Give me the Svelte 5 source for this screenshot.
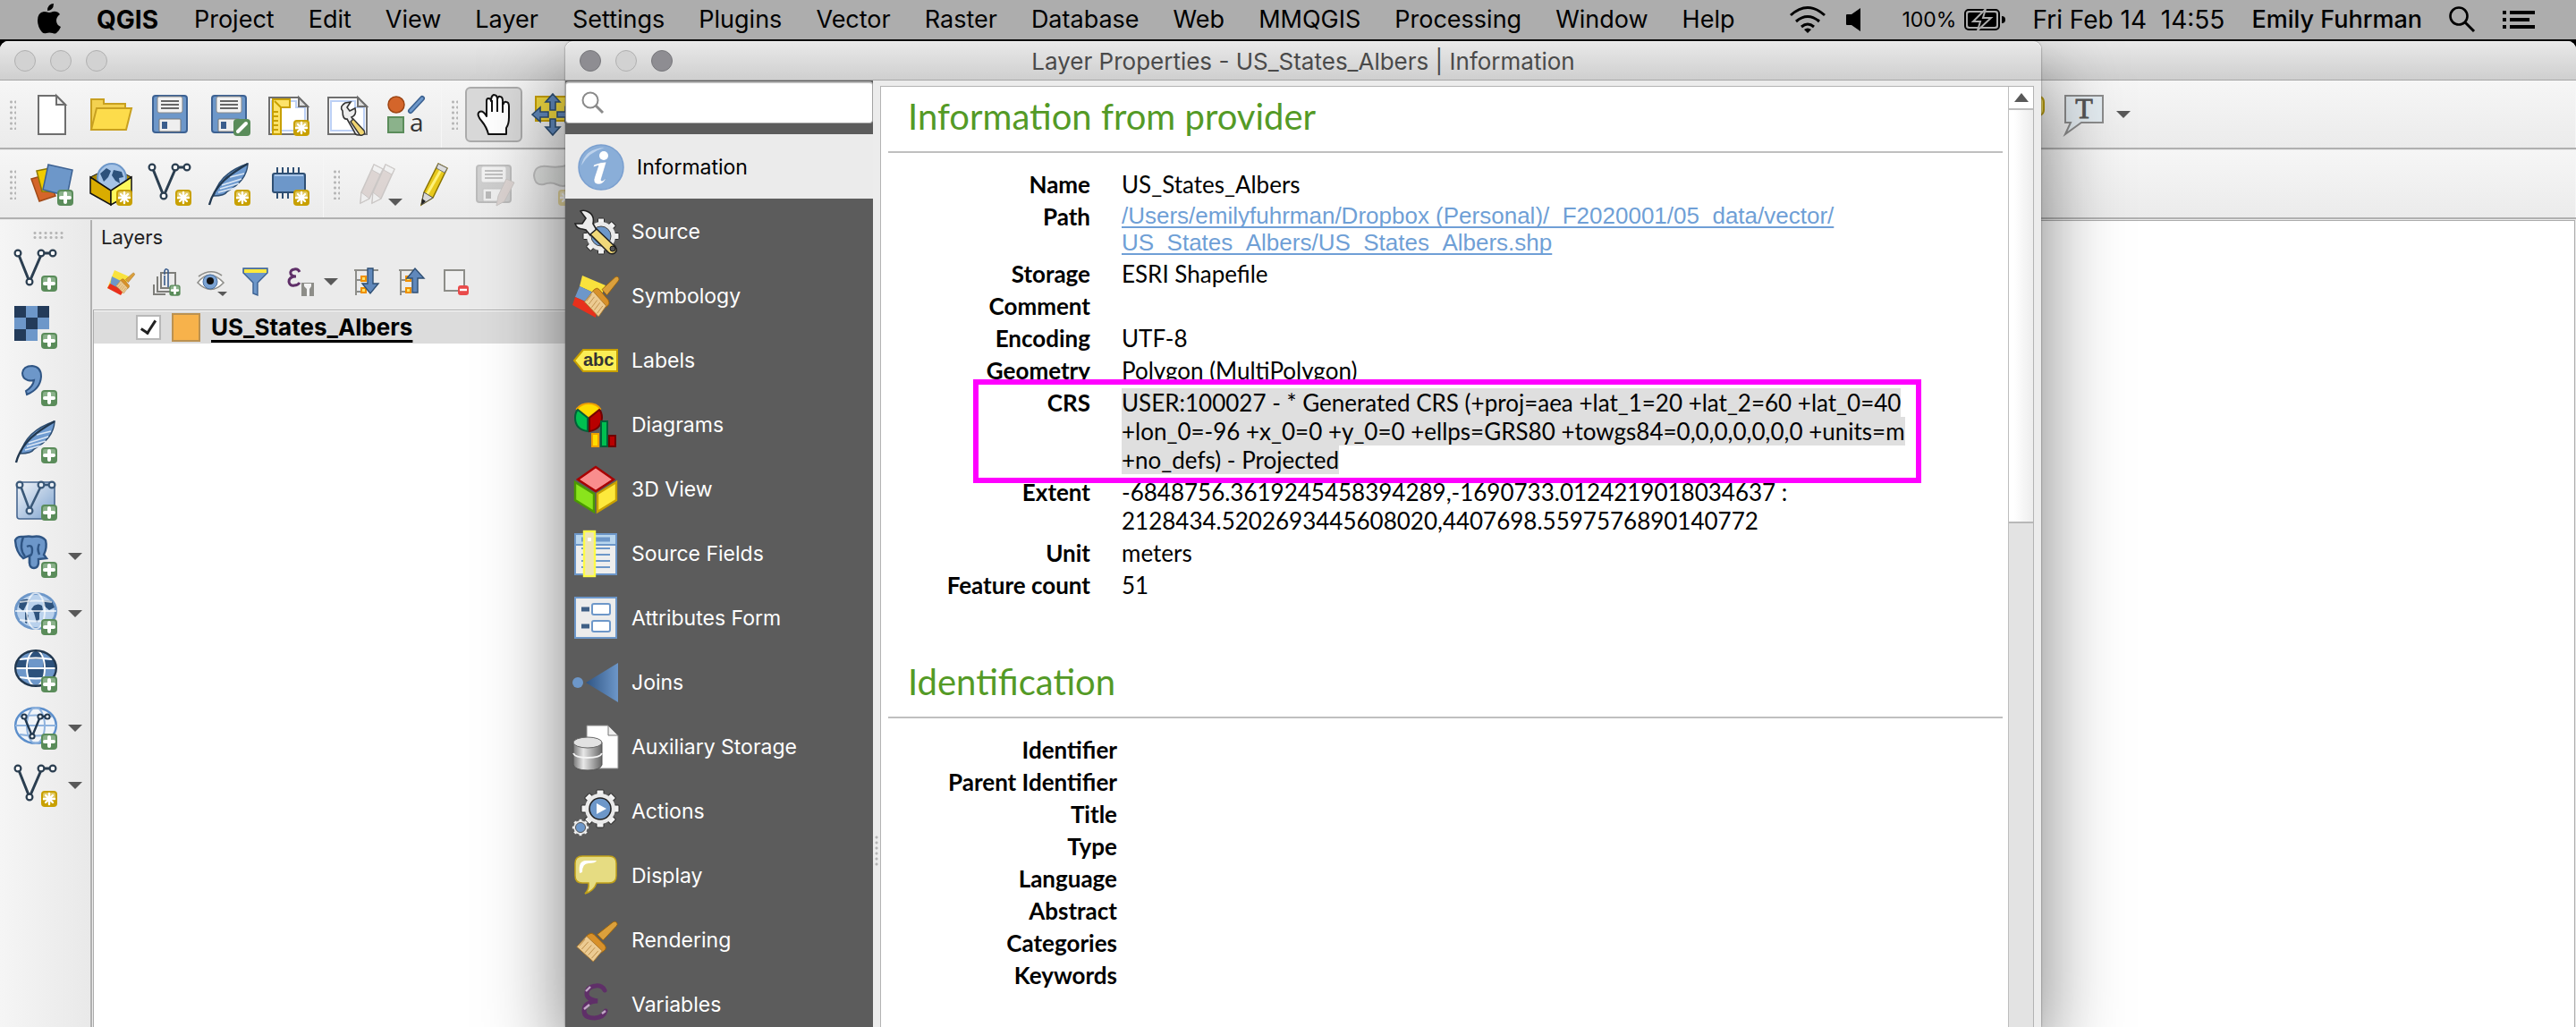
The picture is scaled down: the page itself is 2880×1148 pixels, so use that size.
<script>
  const menus = ['Project', 'Edit', 'View', 'Layer', 'Settings', 'Plugins', 'Vector', 'Raster', 'Database', 'Web', 'MMQGIS', 'Processing', 'Window', 'Help'];

  const fileTools = [
    ['page', 'New project'], ['folder', 'Open project'], ['save', 'Save project'], ['saveas', 'Save project as'],
    ['layout', 'New print layout'], ['layouts', 'Layout manager'], ['styles', 'Style manager'],
  ];
  const sourceTools = [
    ['datasource', 'Data source manager'], ['geopackage', 'New GeoPackage layer'], ['vnew', 'New shapefile layer'],
    ['feathernew', 'New SpatiaLite layer'], ['chip', 'New temporary scratch layer'],
  ];
  const dock = [
    ['vadd', 'Add vector layer', false], ['raster', 'Add raster layer', false], ['comma', 'Add delimited text layer', false],
    ['featheradd', 'Add SpatiaLite layer', false], ['virtual', 'Add virtual layer', false], ['elephant', 'Add PostGIS layer', true],
    ['wms', 'Add WMS layer', true], ['wcs', 'Add WCS layer', false], ['wfs', 'Add WFS layer', true], ['vnew', 'New vector layer', true],
  ];
  const pages = [
    ['source', 'Source'], ['symbology', 'Symbology'], ['labels', 'Labels'], ['diagrams', 'Diagrams'], ['cube', '3D View'],
    ['fields', 'Source Fields'], ['form', 'Attributes Form'], ['joins', 'Joins'], ['storage', 'Auxiliary Storage'],
    ['actions', 'Actions'], ['display', 'Display'], ['rendering', 'Rendering'], ['variables', 'Variables'],
  ];
  const identification = ['Identifier', 'Parent Identifier', 'Title', 'Type', 'Language', 'Abstract', 'Categories', 'Keywords'];
  const teeth = [0, 45, 90, 135, 180, 225, 270, 315];
  let visible = $state(true);
  let query = $state('');
</script>

{#snippet plus()}
  <rect x="30" y="30" width="18" height="18" rx="4" fill="#5a8c5a" />
  <path d="M32 34q0-2 2-2h10q2 0 2 2v4q-7 0-14 3z" fill="#8bb28b" />
  <path d="M39 34v10M34 39h10" stroke="#fff" stroke-width="4" stroke-linecap="round" />
{/snippet}

{#snippet star()}
  <rect x="30" y="30" width="18" height="18" rx="4" fill="#c8a000" />
  <path d="M32 34q0-2 2-2h10q2 0 2 2v4q-7 0-14 3z" fill="#e0c860" />
  <path d="M39 33v12M33 39h12M35 35l8 8M43 35l-8 8" stroke="#fff" stroke-width="2.4" stroke-linecap="round" />
{/snippet}

{#snippet floppy()}
  <rect x="5" y="3" width="38" height="41" rx="3" fill="#6d97c9" stroke="#3c6192" stroke-width="2" />
  <rect x="10" y="4" width="28" height="18" rx="2" fill="#f2f2f2" stroke="#8a8a8a" />
  <path d="M14 9h20M14 13h20M14 17h20" stroke="#666" stroke-width="2" />
  <rect x="12" y="29" width="24" height="14" rx="1" fill="#efefef" stroke="#777" />
  <rect x="15" y="32" width="6" height="8" fill="#3a5d8c" />
{/snippet}

{#snippet vline()}
  <path d="M5 7L17 37L30 7M33 5h9" fill="none" stroke="#2b3e50" stroke-width="3" />
  {#each [[4, 5], [17, 37], [30, 5], [43, 5]] as [x, y]}
    <circle cx={x} cy={y} r="3.4" fill="#fff" stroke="#2b3e50" stroke-width="2.2" />
  {/each}
{/snippet}

{#snippet feather()}
  <path d="M45 1C24 8 11 20 7 37q12 0 15-5 22-12 23-31z" fill="#6f9bd0" stroke="#2f4f73" stroke-width="1.5" />
  <path d="M16 25l22-7M14 29l21-6M12 33l19-5M25 16l16-4" stroke="#dbe7f5" stroke-width="1.6" />
  <path d="M45 1C26 12 8 24 2 47" fill="none" stroke="#22384f" stroke-width="2.4" />
{/snippet}

{#snippet sheet()}
  <path d="M3 5h33l10 10v31H3z" fill="#fff" stroke="#6e6e6e" stroke-width="2" />
  <path d="M6 9h27v7h10v26H6z" fill="none" stroke="#bcd0f5" stroke-width="2" />
  <path d="M36 5v10h10z" fill="#ddd" stroke="#6e6e6e" stroke-width="2" />
{/snippet}

{#snippet brush()}
  <path d="M46 3q3-2 5 1 1 2-1 4L34 25l-7-7z" fill="#dba03c" stroke="#9a6208" />
  <path d="M16 18q4-3 7 0l13 13q3 4-1 7l-3 2-19-19z" fill="#d8912a" stroke="#9a6208" />
  <path d="M14 20l19 18-11 13L2 33z" fill="#eccb92" stroke="#a8762a" />
  <path d="M12 24L5 32M16 27l-8 9M20 31l-8 9M24 34l-8 9M28 38l-8 9" stroke="#b98a45" />
{/snippet}

{#snippet grid(line)}
  <ellipse cx="24" cy="21" rx="10" ry="20" fill="none" stroke={line} stroke-width="2" />
  <path d="M1 21h46M6 11q18 -3 36 0M6 31q18 3 36 0" fill="none" stroke={line} stroke-width="2" />
{/snippet}

{#snippet land()}
  <path d="M6 10q7-4 12-1l-5 6-3 6-5-4zM22 15q5-3 9 0l1 5-4 3v7l-3 4-3-11-3-4zM32 9l10 1 3 7-6 3-6-5zM12 22l4 4-2 9-2-1z" fill="#2d527c" />
{/snippet}

{#snippet gear(cx, cy, r, tooth)}
  <g transform="translate({cx} {cy})">
    {#each teeth as a}
      <rect x={-tooth / 2} y={-r - 4} width={tooth} height="8" rx="1" transform="rotate({a})" fill="#f2f2f2" stroke="#2c2c2c" />
    {/each}
    <circle {r} fill="#eaeaea" />
  </g>
{/snippet}

{#snippet art(name)}
  {#if name === 'page'}
    <path d="M9 3h20l10 10v33H9z" fill="#fff" stroke="#6e6e6e" stroke-width="2" />
    <path d="M29 3v10h10z" fill="#eee" stroke="#6e6e6e" stroke-width="2" />
  {:else if name === 'folder'}
    <path d="M2 41V7h14v5h24v6" fill="#f3d150" stroke="#c8a020" stroke-width="2" />
    <path d="M8 17h39l-6 24H2z" fill="#fddc4b" stroke="#c8a020" stroke-width="2" />
  {:else if name === 'save'}
    {@render floppy()}
  {:else if name === 'saveas'}
    {@render floppy()}
    <rect x="29" y="29" width="19" height="19" rx="4" fill="#5a8c5a" />
    <path d="M34 43l9-9" stroke="#fff" stroke-width="4" stroke-linecap="round" />
  {:else if name === 'layout'}
    {@render sheet()}
    <path d="M7 7h19v9h-10v30H7z" fill="#fde36a" stroke="#c8a000" stroke-width="2" />
    <path d="M9 9l7 7M8 21h5M8 26h5M8 31h5M8 36h5M8 41h5" stroke="#c8a000" stroke-width="2" />
    {@render star()}
  {:else if name === 'layouts'}
    {@render sheet()}
    <path d="M19 20q-4-5 3-9l6-1-4 6 3 4 6-3q2 8-4 10l10 15q2 4-2 5-4 0-5-4l-8-14q-5 1-5-9z" fill="#ededed" stroke="#333" stroke-width="1.6" />
    <path d="M31 29l12 13q2 4-2 5-3 1-4-2l-9-13z" fill="#f0d470" stroke="#333" stroke-width="1.4" />
  {:else if name === 'styles'}
    <circle cx="13" cy="13" r="9" fill="#d4652a" stroke="#9c4413" stroke-width="1.5" />
    <path d="M29 20L42 6" stroke="#3a6090" stroke-width="6" stroke-linecap="round" />
    <path d="M29 20L42 6" stroke="#6d97c9" stroke-width="3" stroke-linecap="round" />
    <rect x="4" y="27" width="17" height="17" fill="#8bb28b" stroke="#5a8c5a" stroke-width="2" />
    <text x="28" y="43" class="t-a">a</text>
  {:else if name === 'hand'}
    <path d="M18 46q-2-8-7-14-7-8-3-11 4-2 8 5V9q0-3 2-3 3 0 3 3 0-6 3-7 4 0 4 5 1-4 3-3 3 0 3 5l1 3q1-3 3-2 3 0 3 5v12q0 8-3 12v7z" fill="#fff" stroke="#111" stroke-width="2" stroke-linejoin="round" />
    <path d="M22 8v13M28 7v14M34 10v12" stroke="#111" stroke-width="2" />
  {:else if name === 'move'}
    <rect x="5" y="4" width="38" height="27" fill="#f0d840" stroke="#c8a000" stroke-width="2" />
    <path d="M24 1l8 9h-5v9h-6v-9h-5zM24 47l8-9h-5v-9h-6v9h-5zM1 24l9-8v5h9v6h-9v5zM47 24l-9-8v5h-9v6h9v5z" fill="#6088bb" stroke="#2f4f73" stroke-width="1.6" />
  {:else if name === 'tip'}
    <path d="M4 4h37q4 2 4 6v9q0 4-4 6H4z" fill="#f0dc5a" stroke="#b89b10" stroke-width="2" />
  {:else if name === 'annotation'}
    <path d="M3 3h42v30H21L3 46l6-13H3z" fill="#e4ecf1" stroke="#8c8c8c" stroke-width="2" />
    <text x="24" y="28" class="t-t">T</text>
  {:else if name === 'datasource'}
    <path d="M1 18l18-5 9 24-18 6z" fill="#d4652a" stroke="#a04a18" stroke-width="1.5" />
    <path d="M7 9l20-4 4 28-18-1z" fill="#f0cc00" stroke="#8d7800" stroke-width="1.5" />
    <path d="M20 2l27 6-6 29-27-7z" fill="#6d97c9" stroke="#3c6192" stroke-width="1.5" />
    {@render plus()}
  {:else if name === 'geopackage'}
    <path d="M1 16l10-5 13 8 13-8 10 5-23 14z" fill="#a88600" stroke="#111" />
    <circle cx="25" cy="17" r="16" fill="#a5c3e6" stroke="#6d97c9" stroke-width="2" />
    <path d="M12 12l7-6 5 3-3 7-5 5zM27 8l9 2 2 6-5 1 1 6-5-3-4-6z" fill="#2d527c" />
    <path d="M1 16l23 15v16L1 34z" fill="#d9ac00" stroke="#111" stroke-width="1.5" />
    <path d="M47 16L24 31v16l23-13z" fill="#fff95c" stroke="#111" stroke-width="1.5" />
    {@render star()}
  {:else if name === 'vnew'}
    {@render vline()}{@render star()}
  {:else if name === 'vadd'}
    {@render vline()}{@render plus()}
  {:else if name === 'feathernew'}
    {@render feather()}{@render star()}
  {:else if name === 'featheradd'}
    {@render feather()}{@render plus()}
  {:else if name === 'chip'}
    <path d="M12 5v8M18 5v8M24 5v8M30 5v8M36 5v8M12 33v7M18 33v7M24 33v7" stroke="#2f4f73" stroke-width="2" />
    <rect x="7" y="12" width="36" height="21" rx="2" fill="#6d97c9" stroke="#2f4f73" stroke-width="2" />
    <path d="M9 14h32" stroke="#a8c6ea" stroke-width="2" />
    {@render star()}
  {:else if name === 'pencils'}
    <g class="faded">
      <path d="M22 2l10 5-15 33-10 5 1-12zM35 2l10 5-15 33-10 5 1-12z" fill="#b9a29c" stroke="#857a76" stroke-width="1.5" />
      <path d="M22 2l10 5-3 6-9-5zM35 2l10 5-3 6-9-5zM8 33l9 7-10 5zM21 33l9 7-10 5z" fill="#eee" stroke="#857a76" />
    </g>
  {:else if name === 'pencil'}
    <path d="M28 1l10 5-16 33L9 47l3-14z" fill="#e8c91c" stroke="#8a7400" stroke-width="1.5" />
    <path d="M31 8L15 36" stroke="#fff27a" stroke-width="3" />
    <path d="M28 1l10 5-3 5-9-5z" fill="#ddd" stroke="#777" />
    <path d="M12 33l10 6L9 47z" fill="#d9d9d9" stroke="#555" />
    <path d="M10 40l4 3-5 4z" fill="#222" />
  {:else if name === 'saveedits'}
    <g class="faded"><g class="grey">{@render floppy()}</g>
      <path d="M38 18l9 4-11 21-9 5 2-11z" fill="#b9a29c" stroke="#857a76" /></g>
  {:else if name === 'blob'}
    <g class="faded"><path d="M3 14Q4 2 18 4t24-2q8 12 0 22-6 4-14 0-6-3-14 0Q4 26 3 14z" fill="#bdc2bd" stroke="#666" stroke-width="2" />{@render star()}</g>
  {:else if name === 'raster'}
    <rect width="39" height="39" fill="#6d97c9" />
    <path d="M0 0h13v13H0zM26 0h13v13H26zM13 13h13v13H13zM0 26h13v13H0z" fill="#233b5a" />
    <path d="M26 26h13v13H26z" fill="#ededed" />
    {@render plus()}
  {:else if name === 'comma'}
    <path d="M20 3q10 1 10 12-1 14-16 20l-1-4q8-5 9-12-3 1-7 0-6-2-6-8 1-8 11-8z" fill="#6d97c9" stroke="#2f5584" stroke-width="2" />
    {@render plus()}
  {:else if name === 'virtual'}
    <rect x="3" y="5" width="42" height="41" rx="3" fill="url(#skyfade)" stroke="#46668f" stroke-width="1.6" />
    <path d="M7 9l10 27L30 9M33 8h8" fill="none" stroke="#3a5878" stroke-width="2.6" />
    {#each [[6, 8], [17, 37], [30, 8], [42, 8]] as [x, y]}
      <circle cx={x} cy={y} r="3.4" fill="#e8eef5" stroke="#3a5878" stroke-width="2.2" />
    {/each}
    {@render plus()}
  {:else if name === 'elephant'}
    <path d="M1 6Q3 1 10 2q7-1 10 0 10-2 15 4 2 8-2 16l3 4-9 1v5q-1 5-5 5-5 0-5-6v-8l-7 3Q2 20 1 6z" fill="#6d97c9" stroke="#2f5584" stroke-width="2.4" />
    <path d="M10 2q-5 14 2 22M14 13q6-3 6 4t-4 6M28 22q-3-7 0-12M17 24v8" fill="none" stroke="#2f5584" stroke-width="2.4" />
    {@render plus()}
  {:else if name === 'wms'}
    <ellipse cx="24" cy="21" rx="22.5" ry="19.5" fill="#b9d1ec" stroke="#6d97c9" stroke-width="3" />
    {@render land()}{@render grid('#ffffffb0')}{@render plus()}
  {:else if name === 'wcs'}
    <ellipse cx="24" cy="21" rx="22.5" ry="19.5" fill="#6d97c9" />
    <path d="M3 12h13v9H2zM32 12h13l2 9H32zM17 3q7-3 14 0l2 8H15zM14 22h20l-1 9H15z" fill="#2d527c" />
    {@render grid('#fff')}
    <ellipse cx="24" cy="21" rx="22.8" ry="19.8" fill="none" stroke="#22384f" stroke-width="2.4" />
    {@render plus()}
  {:else if name === 'wfs'}
    <ellipse cx="24" cy="21" rx="22.8" ry="19.8" fill="#f0f4f9" stroke="#5b8ecb" stroke-width="2.4" />
    {@render grid('#8fb3de')}
    <path d="M11 11l9 22 9-22h8" fill="none" stroke="#22384f" stroke-width="2.4" />
    {#each [[11, 11], [20, 33], [29, 11], [37, 11]] as [x, y]}
      <circle cx={x} cy={y} r="2.6" fill="#fff" stroke="#22384f" stroke-width="2" />
    {/each}
    {@render plus()}
  {/if}
{/snippet}

{#snippet tool(name, label)}
  <button class="tool" aria-label={label}><svg viewBox="0 0 48 48">{@render art(name)}</svg></button>
{/snippet}

{#snippet pageArt(name)}
  {#if name === 'source'}
    {@render gear(32, 31, 16, 7)}
    <circle cx="32" cy="31" r="11" fill="#6d97c9" stroke="#444" />
    <path d="M3 17q2 6 8 6l4 1 5 6 7-6-4-7q2-9-5-13-5-3-9-1l6 8-4 6z" fill="#ececec" stroke="#222" stroke-width="1.6" />
    <path d="M20 29l7-6 21 20q3 4-1 7-4 2-7-1z" fill="#f0d879" stroke="#222" stroke-width="1.6" />
    <circle cx="45" cy="45" r="3" fill="#555" stroke="#111" />
  {:else if name === 'symbology'}
    <path d="M11 3l26 11-5 12L8 15z" fill="#f9e23c" />
    <path d="M8 15l24 11-4 12L3 27z" fill="#6d97c9" />
    <path d="M3 27l25 11-2 12L0 36z" fill="#e8301c" />
    <g transform="translate(12 2) scale(.78 .92)">{@render brush()}</g>
  {:else if name === 'labels'}
    <path d="M2 26L12 14h38v24H12z" fill="#fbee56" stroke="#c8a000" stroke-width="2" />
    <text x="12" y="32" class="t-abc">abc</text>
  {:else if name === 'diagrams'}
    <path d="M18 18L5 8q5-6 13-6 9 0 13 6z" fill="#ffdc00" stroke="#f0a000" stroke-width="2" />
    <path d="M17 18v15Q3 31 3 18q0-6 3-9z" fill="#00c050" stroke="#006038" stroke-width="2" />
    <path d="M19 18v15q13-2 14-15 0-6-3-9z" fill="#b80000" stroke="#700000" stroke-width="2" />
    <rect x="22" y="36" width="7" height="14" fill="#ffdc00" stroke="#f0a000" stroke-width="2" />
    <rect x="41" y="38" width="7" height="12" fill="#b80000" stroke="#700000" stroke-width="2" />
    <rect x="32" y="22" width="7" height="28" fill="#00c050" stroke="#006038" stroke-width="2" />
  {:else if name === 'cube'}
    <path d="M26 1l20 14-20 13L6 15z" fill="#f98d8d" stroke="#a80000" stroke-width="2.4" />
    <path d="M3 18l21 13v20L3 38z" fill="#8ae41c" stroke="#4a9a00" stroke-width="2.4" />
    <path d="M49 18L28 31v20l21-13z" fill="#fde93c" stroke="#c8a000" stroke-width="2.4" />
  {:else if name === 'fields'}
    <rect x="3" y="4" width="46" height="45" fill="#eee" stroke="#6d97c9" stroke-width="2" />
    <rect x="4" y="5" width="44" height="11" fill="#b9d6ee" />
    <path d="M3 16h46M10 20h32M10 27h32M10 34h32M10 41h32" stroke="#6d97c9" stroke-width="2" />
    <path d="M10 10h32" stroke="#6d97c9" stroke-width="5" />
    <rect x="13" y="1" width="12" height="50" fill="#eee5b8" stroke="#fdfb46" stroke-width="2.4" />
    <rect x="17" y="8" width="4" height="4" fill="#fff" />
  {:else if name === 'form'}
    <rect x="3" y="3" width="46" height="45" fill="#ececec" stroke="#6d97c9" stroke-width="2" />
    <path d="M10 16h9M10 35h9" stroke="#3f5f85" stroke-width="5" />
    <rect x="22" y="10" width="20" height="12" rx="2" fill="#fff" stroke="#6d97c9" stroke-width="2" />
    <rect x="22" y="29" width="20" height="12" rx="2" fill="#fff" stroke="#6d97c9" stroke-width="2" />
  {:else if name === 'joins'}
    <circle cx="6" cy="26" r="6" fill="#6d97c9" />
    <path d="M15 26L51 4v44z" fill="url(#cone)" />
  {:else if name === 'storage'}
    <path d="M16 2h24l11 11v37H16z" fill="#fff" stroke="#888" />
    <path d="M40 2v11h11z" fill="#eee" stroke="#777" />
    <path d="M1 21v25q2 6 16 6t16-6V21z" fill="url(#steel)" stroke="#555" />
    <path d="M1 33q2 5 16 5t16-5" fill="none" stroke="#f5f5f5" stroke-width="2" />
    <ellipse cx="17" cy="21" rx="16" ry="6" fill="#e2e2e2" stroke="#666" />
  {:else if name === 'actions'}
    {@render gear(31, 23, 17, 8)}
    <circle cx="31" cy="23" r="12" fill="#6d97c9" stroke="#222" stroke-width="1.6" />
    <path d="M27 17v12l11-6z" fill="#fff" />
    <g transform="translate(9 44) scale(.45)">{@render gear(0, 0, 17, 8)}</g>
    <circle cx="9" cy="44" r="5.5" fill="#6d97c9" stroke="#555" />
  {:else if name === 'display'}
    <path d="M11 4h30q8 0 8 8v14q0 8-8 8H27q-3 9-13 12 5-5 4-12h-7q-8 0-8-8V12q0-8 8-8z" fill="#e6dc82" stroke="#c0a018" stroke-width="1.5" />
    <path d="M8 23q-2-14 7-14h12q-1 3-9 3-7 0-7 10z" fill="#fff" />
  {:else if name === 'rendering'}
    <g transform="translate(3 3) scale(.92)">{@render brush()}</g>
  {:else if name === 'variables'}
    <path d="M36 10Q33 4 26 5q-10 1-10 9 0 6 12 8-15 1-15 11 0 8 12 8 10-1 12-8" fill="none" stroke="#5f2f68" stroke-width="5" stroke-linecap="round" />
    <path d="M15 11l5-5M13 31l6-5M33 36l4-3" stroke="#c3a8c8" stroke-width="2.4" />
  {/if}
{/snippet}

{#snippet arrow()}
  <svg class="arrow" viewBox="0 0 16 8"><path d="M0 0h16L8 8z" fill="#595959" /></svg>
{/snippet}

<svg class="defs" aria-hidden="true">
  <defs>
    <linearGradient id="skyfade" x1="0" y1="0" x2="1" y2="1"><stop offset="0" stop-color="#f2f5f9" /><stop offset="1" stop-color="#7ea3cf" /></linearGradient>
    <linearGradient id="cone"><stop offset="0" stop-color="#2f5584" /><stop offset="1" stop-color="#6d97c9" /></linearGradient>
    <linearGradient id="steel"><stop offset="0" stop-color="#777" /><stop offset=".35" stop-color="#e8e8e8" /><stop offset="1" stop-color="#666" /></linearGradient>
  </defs>
</svg>

<div class="screen">
  <header class="menubar">
    <svg class="apple" viewBox="0 0 26 34"><path d="M18 1q0 4-2 6t-5 2q0-4 2-6t5-2zM13 11q2 0 4-1 5-1 8 3-4 3-4 7 0 5 5 7-2 5-5 7-2 1-4 0-4-1-7 0-3 1-5-1Q0 27 0 20q0-9 7-10 2 0 6 1z" /></svg>
    <b>QGIS</b>
    {#each menus as m}<span>{m}</span>{/each}
    <div class="status">
      <svg class="wifi" viewBox="0 0 42 30"><g fill="none" stroke="#000" stroke-width="3"><path d="M2 10q19-17 38 0M8 17q13-11 26 0M14 23q7-6 14 0" /></g><path d="M17 26q4-3 8 0l-4 4z" /></svg>
      <svg class="volume" viewBox="0 0 17 26"><path d="M0 8q0-1 1-1h5l10-7v26L6 19H1q-1 0-1-1z" /></svg>
      <span class="charge">100%
        <svg class="battery" viewBox="0 0 46 24"><rect x="1" y="1" width="38" height="22" rx="4" fill="none" stroke="#000" stroke-width="2" /><rect x="4" y="4" width="32" height="16" rx="2" /><path d="M42 8q4 0 4 4t-4 4z" /><path d="M24 0L10 14h8l-3 10L30 10h-9z" stroke="#adadad" stroke-width="2" /></svg>
      </span>
      <span class="clock">Fri Feb 14&nbsp; 14:55</span>
      <span class="user">Emily Fuhrman</span>
      <svg class="find" viewBox="0 0 30 30"><circle cx="11" cy="11" r="9.5" fill="none" stroke="#000" stroke-width="2.6" /><path d="M18 18l10 10" stroke="#000" stroke-width="3" /></svg>
      <svg class="list" viewBox="0 0 36 20"><path d="M0 2h4M8 2h28M0 10h4M8 10h22M0 18h4M8 18h28" stroke="#000" stroke-width="4" /></svg>
    </div>
  </header>

  <main class="window">
    <div class="titlebar"><i></i><i></i><i></i></div>

    <div class="toolbar">
      <div class="segment"><span class="grip"></span>{#each fileTools as [n, l]}{@render tool(n, l)}{/each}</div>
      <div class="segment grow">
        <span class="grip"></span>
        <button class="tool pressed" aria-label="Pan map"><svg viewBox="0 0 48 48">{@render art('hand')}</svg></button>
        {@render tool('move', 'Pan map to selection')}
        <div class="far">{@render tool('tip', 'Show map tips')}{@render tool('annotation', 'Text annotation')}{@render arrow()}</div>
      </div>
    </div>
    <div class="toolbar">
      <div class="segment"><span class="grip"></span>{#each sourceTools as [n, l]}{@render tool(n, l)}{/each}</div>
      <div class="segment grow">
        <span class="grip"></span>
        <div class="with-menu">{@render tool('pencils', 'Current edits')}{@render arrow()}</div>
        {@render tool('pencil', 'Toggle editing')}
        {@render tool('saveedits', 'Save layer edits')}
        {@render tool('blob', 'Add polygon feature')}
      </div>
    </div>

    <div class="workspace">
      <nav class="dock">
        <span class="grip wide"></span>
        {#each dock as [n, l, more]}
          <div class="dock-row">{@render tool(n, l)}{#if more}{@render arrow()}{/if}</div>
        {/each}
      </nav>

      <section class="layers">
        <h2>Layers</h2>
        <div class="layer-tools">
          <button aria-label="Open layer styling"><svg viewBox="0 0 32 32"><path d="M8 3l16 7-8 20L0 23z" fill="#f9e23c" /><path d="M5 10l16 8-4 9-14-7z" fill="#6d97c9" /><path d="M3 18l15 8-3 5-15-8z" fill="#e8301c" /><g transform="translate(9 5) scale(.42 .47)">{@render brush()}</g></svg></button>
          <button aria-label="Add group"><svg viewBox="0 0 32 32"><path d="M6 10v17h17M10 6h16v17H10zM2 19v11h13" fill="none" stroke="#7e7e7a" stroke-width="2" /><path d="M14 20V9M18 22V3q-3-3-4 1v4" fill="none" stroke="#3a5d8c" stroke-width="1.6" /><g transform="translate(-1 -1) scale(.68)">{@render plus()}</g></svg></button>
          <button aria-label="Manage map themes"><svg viewBox="0 0 32 32"><path d="M1 17Q14 0 30 17 16 32 1 17z" fill="#fff" stroke="#8e8e8a" stroke-width="1.6" /><path d="M2 10q14-10 26-1" fill="none" stroke="#8e8e8a" stroke-width="1.6" /><circle cx="15" cy="16" r="8" fill="#7ba3d3" stroke="#4a6f9f" /><circle cx="15" cy="15" r="4" fill="#111" /><path d="M23 27h11l-5 5z" fill="#595959" /></svg></button>
          <button aria-label="Filter legend"><svg viewBox="0 0 32 32"><path d="M2 1h27v5L18 17v14l-5-2V17L2 6z" fill="#6d97c9" stroke="#3c6192" stroke-width="1.4" /><path d="M3 2h25v4H3z" fill="#fde93c" /></svg></button>
          <button class="joined" aria-label="Filter by expression"><svg viewBox="0 0 32 32"><path d="M15 5q-2-4-6-3-5 1-4 5 1 3 6 3-8 0-8 6 1 5 6 4 4 0 6-3" fill="none" stroke="#5f2f68" stroke-width="3" /><path d="M17 17h14v15h-5v-8h-3v8h-6z" fill="#8d8d88" /><path d="M20 18h8v3l-2 3v7h-3v-7l-3-3z" fill="#f3f3f3" /></svg>{@render arrow()}</button>
          <button aria-label="Expand all"><svg viewBox="0 0 32 32"><path d="M2 3h27M4 3v28M4 14h6M4 27h6" stroke="#8d8d88" stroke-width="2" fill="none" /><path d="M10 10h5v5h-5zM10 23h5v5h-5z" fill="#fde36a" stroke="#f09000" stroke-width="2" /><path d="M17 1h6v17h6l-9 11-9-11h6z" fill="#6088bb" stroke="#2f4f73" stroke-width="1.4" /></svg></button>
          <button aria-label="Collapse all"><svg viewBox="0 0 32 32"><path d="M2 3h20M4 3v28M4 14h6M4 27h6" stroke="#8d8d88" stroke-width="2" fill="none" /><path d="M10 10h5v5h-5zM10 23h5v5h-5z" fill="#fde36a" stroke="#f09000" stroke-width="2" /><path d="M17 28h6V12h7L20 1l-9 11h6z" fill="#6088bb" stroke="#2f4f73" stroke-width="1.4" /></svg></button>
          <button aria-label="Remove layer"><svg viewBox="0 0 32 32"><rect x="3" y="3" width="22" height="23" fill="#f0f0f0" stroke="#8d8d88" stroke-width="2" /><rect x="18" y="20" width="12" height="11" rx="3" fill="#e94b4b" /><path d="M20 25h8" stroke="#fff" stroke-width="2.4" /></svg></button>
        </div>
        <div class="tree">
          <div class="layer">
            <label><input type="checkbox" bind:checked={visible} /><span class="swatch"></span><span class="layer-name">US_States_Albers</span></label>
          </div>
        </div>
      </section>
      <div class="canvas"></div>
    </div>
  </main>

  <div class="dialog" role="dialog" aria-label="Layer Properties">
    <div class="titlebar"><i class="on"></i><i></i><i class="on"></i><h1>Layer Properties - US_States_Albers | Information</h1></div>
    <div class="dialog-body">
      <aside>
        <label class="search">
          <svg viewBox="0 0 26 26"><circle cx="10" cy="10" r="8.5" fill="none" stroke="#8a8a8a" stroke-width="2" /><path d="M16 16l8 8" stroke="#8a8a8a" stroke-width="3" /></svg>
          <input type="text" aria-label="Search" bind:value={query} />
        </label>
        <button class="page current">
          <svg viewBox="0 0 52 52"><circle cx="26" cy="26" r="25" fill="#8aaed8" stroke="#7a9fcf" stroke-width="1.5" /><path d="M4 24Q8 5 30 4 12 9 4 24z" fill="#bdd2ec" /><circle cx="29" cy="13" r="5" fill="#fff" /><path d="M18 23q8-3 14-3l-6 20q0 3 6-2-4 8-10 7-6-1-3-9l4-12-6 2z" fill="#fff" stroke="#7a9fcf" stroke-width=".6" /></svg>
          Information
        </button>
        {#each pages as [n, l]}
          <button class="page"><svg viewBox="0 0 52 52">{@render pageArt(n)}</svg>{l}</button>
        {/each}
      </aside>
      <div class="splitter"><span></span></div>
      <div class="viewer">
        <article>
          <h2>Information from provider</h2>
          <table>
            <tbody>
              <tr><th>Name</th><td>US_States_Albers</td></tr>
              <tr><th>Path</th><td class="path"><a href="#path">/Users/emilyfuhrman/Dropbox (Personal)/_F2020001/05_data/vector/<br />US_States_Albers/US_States_Albers.shp</a></td></tr>
              <tr><th>Storage</th><td>ESRI Shapefile</td></tr>
              <tr><th>Comment</th><td></td></tr>
              <tr><th>Encoding</th><td>UTF-8</td></tr>
              <tr><th>Geometry</th><td>Polygon (MultiPolygon)</td></tr>
              <tr><th>CRS</th><td class="crs"><mark>USER:100027 - * Generated CRS (+proj=aea +lat_1=20 +lat_2=60 +lat_0=40<br />+lon_0=-96 +x_0=0 +y_0=0 +ellps=GRS80 +towgs84=0,0,0,0,0,0,0 +units=m<br />+no_defs) - Projected</mark><span class="callout"></span></td></tr>
              <tr><th>Extent</th><td>-6848756.3619245458394289,-1690733.0124219018034637 :<br />2128434.5202693445608020,4407698.5597576890140772</td></tr>
              <tr><th>Unit</th><td>meters</td></tr>
              <tr><th>Feature count</th><td>51</td></tr>
            </tbody>
          </table>
          <h2>Identification</h2>
          <table class="empty">
            <tbody>
              {#each identification as l}<tr><th>{l}</th><td></td></tr>{/each}
            </tbody>
          </table>
        </article>
        <div class="scrollbar">
          <button aria-label="Scroll up"><svg viewBox="0 0 16 10"><path d="M0 10L8 0l8 10z" fill="#595959" /></svg></button>
          <div class="thumb"></div>
          <div class="track"></div>
        </div>
      </div>
    </div>
  </div>
</div>

<style>
  :global(body) { margin: 0; overflow: hidden; }
  .defs { position: absolute; width: 0; height: 0; }
  button { font: inherit; color: inherit; background: none; border: 0; padding: 0; margin: 0; }
  h1, h2 { margin: 0; font-weight: 400; }
  svg { display: block; flex: none; overflow: visible; }

  .screen { position: relative; display: flex; flex-direction: column; height: 100vh; overflow: hidden; background: #000; font-family: Inter, "Liberation Sans", sans-serif; color: #000; }

  .menubar { position: relative; z-index: 3; flex: none; display: flex; align-items: center; gap: 38px; height: 44px; padding: 0 46px 0 42px; background: #adadad; border-bottom: 2px solid #000; font-size: 27px; line-height: 44px; white-space: nowrap; }
  .apple { width: 26px; height: 34px; margin-bottom: 4px; }
  .menubar b { margin: 0 2px; font-size: 28px; }
  .status { display: flex; align-items: center; gap: 30px; margin-left: auto; }
  .wifi { width: 42px; height: 30px; margin-right: -8px; }
  .volume { width: 17px; height: 26px; margin-right: 16px; }
  .charge { display: flex; align-items: center; gap: 9px; font-size: 23px; }
  .battery { width: 46px; height: 24px; }
  .clock { font-size: 28px; }
  .user { font-weight: 500; }
  .find { width: 30px; height: 30px; }
  .list { width: 36px; height: 20px; }

  .window { flex: 1; min-height: 0; display: flex; flex-direction: column; background: #ebebeb; border-radius: 9px 9px 0 0; overflow: hidden; }
  .titlebar { flex: none; position: relative; display: flex; align-items: center; gap: 16px; height: 43px; padding-left: 16px; background: linear-gradient(#e9e9e9, #cfcfcf); border-bottom: 1px solid #a6a6a6; box-shadow: inset 0 1px #f6f6f6; }
  .titlebar i { box-sizing: border-box; width: 24px; height: 24px; border: 1px solid #b0b0b0; border-radius: 50%; background: #d2d2d2; }
  .titlebar i.on { border-color: #77777b; background: #8e8d92; }
  .titlebar h1 { position: absolute; inset: 0; text-align: center; font-size: 26px; line-height: 46px; color: #4a4a4a; }

  .toolbar { flex: none; display: flex; height: 75px; border-bottom: 2px solid #b0b0b0; margin-bottom: 1px; background: linear-gradient(#f6f6f6, #ebebeb); }
  .segment { display: flex; align-items: center; gap: 18px; padding: 0 15px 0 10px; border-right: 1px solid #f6f6f6; }
  .grow { flex: 1; }
  .far { display: flex; align-items: center; gap: 18px; margin-left: auto; padding-right: 482px; }
  .far .arrow { margin-left: -6px; }
  .grip { width: 8px; height: 34px; margin-right: -2px; background: radial-gradient(circle, #b5b5b5 1px, transparent 2px) 0 0 / 5px 6px; }
  .tool { flex: none; width: 48px; height: 48px; }
  .tool svg { width: 48px; height: 48px; }
  .pressed { box-sizing: border-box; width: 64px; height: 62px; margin: 0 -8px; padding: 5px 6px; border: 2px solid #ababab; border-radius: 6px; background: #d9d9d9; }
  .with-menu { display: flex; align-items: flex-end; }
  .with-menu .arrow { margin: 0 -6px 0 -10px; }
  .arrow { width: 16px; height: 8px; }
  .faded { opacity: .35; }
  .grey { filter: grayscale(1); }
  .t-a { font: 28px "Open Sans", sans-serif; fill: #333; }
  .t-t { font: 32px "Liberation Serif", serif; fill: #555; stroke: #555; stroke-width: .8px; text-anchor: middle; }
  .t-abc { font: 700 20px "Liberation Sans", sans-serif; fill: #333; }

  .workspace { flex: 1; min-height: 0; display: flex; }
  .dock { flex: none; box-sizing: border-box; width: 103px; padding: 12px 0 0 16px; display: flex; flex-direction: column; gap: 16px; background: linear-gradient(90deg, #f5f5f5, #e9e9e9); border-right: 2px solid #b0b0b0; }
  .grip.wide { flex: none; width: 36px; height: 9px; margin: 0 0 -5px 20px; background-size: 6px 5px; }
  .dock-row { display: flex; align-items: center; gap: 12px; }

  .layers { flex: none; width: 22%; display: flex; flex-direction: column; margin-left: 1px; }
  .layers h2 { padding: 1px 0 0 9px; font-size: 22px; line-height: 36px; color: #222; }
  .layer-tools { display: flex; align-items: center; gap: 18px; height: 63px; padding-left: 16px; }
  .layer-tools button { display: flex; align-items: center; gap: 10px; }
  .layer-tools button svg:first-child { width: 32px; height: 32px; }
  .joined { margin-right: -2px; }
  .tree { flex: 1; border: solid #ababab; border-width: 1px 0 0 1px; background: #fff; }
  .layer { margin-top: 1px; height: 36px; background: #dcdcdc; }
  .layer label { display: flex; align-items: center; height: 36px; padding-left: 47px; }
  .layer input { appearance: none; box-sizing: border-box; width: 28px; height: 28px; margin: 0 12px 0 0; border: 2px solid #b8b8b8; background: #fff; }
  .layer input:checked::before { content: ""; display: block; width: 7px; height: 15px; margin: 1px 0 0 7px; border: solid #222; border-width: 0 3px 3px 0; transform: rotate(33deg); }
  .swatch { box-sizing: border-box; width: 32px; height: 32px; border: 2px solid #bb9150; background: #f7b24b; }
  .layer-name { margin-left: 12px; font-size: 26px; font-weight: 700; line-height: 32px; text-decoration: underline; text-decoration-thickness: 3px; text-underline-offset: 5px; text-decoration-skip-ink: none; }
  .canvas { flex: 1; margin-right: 1px; border: 1px solid #ababab; border-bottom: 0; background: #fff; }

  .dialog { position: absolute; z-index: 2; top: 46px; bottom: 0; left: 632px; right: 598px; display: flex; flex-direction: column; background: #ececec; border-radius: 9px 9px 0 0; box-shadow: 0 0 2px #555, 0 36px 90px rgba(0, 0, 0, .52); }
  .dialog .titlebar { border-radius: 9px 9px 0 0; }
  .dialog-body { flex: 1; min-height: 0; display: flex; }
  aside { flex: none; width: 344px; overflow: hidden; background: #5c5c5c; }
  .search { box-sizing: border-box; display: flex; align-items: center; height: 47px; margin: 1px 0 12px; padding-left: 17px; background: #fff; border: 1px solid #a3a3a3; border-top: 2px solid #b9b9b9; border-radius: 4px; }
  .search svg { width: 26px; height: 26px; }
  .search input { flex: 1; min-width: 0; border: 0; outline: 0; background: none; font-size: 23px; }
  .page { box-sizing: border-box; display: flex; align-items: center; gap: 14px; width: 100%; height: 72px; padding: 2px 0 0 8px; color: #fff; font-size: 23px; text-align: left; }
  .page svg { width: 52px; height: 52px; }
  .current { padding-left: 14px; background: #ebebeb; color: #000; }

  .splitter { flex: none; width: 8px; display: flex; align-items: flex-end; justify-content: center; padding-bottom: 179px; background: #ececec; }
  .splitter span { width: 4px; height: 36px; background: radial-gradient(circle, #b5b5b5 1px, transparent 2px) 0 0 / 4px 6px; }
  .viewer { flex: 1; min-width: 0; display: flex; margin: 6px 8px 0 0; border: 1px solid #b3b3b3; border-bottom: 0; background: #fff; overflow: hidden; }
  article { flex: 1; min-width: 0; padding: 9px 6px 0 8px; font-family: Lato, sans-serif; }
  article h2 { padding: 0 0 15px 22px; border-bottom: 2px solid #bfbfbf; font-size: 40px; line-height: 48px; color: #549a26; }
  table { width: 100%; margin: 17px 0 66px; border-collapse: collapse; font-size: 26px; line-height: 32px; }
  th, td { padding: 2px 0; vertical-align: top; height: 32px; }
  th { width: 226px; padding-right: 35px; text-align: right; font-weight: 700; white-space: nowrap; }
  td { text-align: left; }
  .empty th { width: 256px; padding-right: 5px; }
  .path { font-family: "Liberation Sans", Arial, sans-serif; line-height: 30px; }
  a { color: #6f9fd6; text-decoration: underline; text-decoration-thickness: 2px; text-underline-offset: 3px; text-decoration-skip-ink: none; }
  .crs { position: relative; }
  mark { background: #dfdfdf; color: inherit; }
  .callout { position: absolute; inset: -8px 91px -8px -166px; border: 6px solid #f0f; pointer-events: none; }
  .scrollbar { flex: none; width: 27px; display: flex; flex-direction: column; border-left: 1px solid #bdbdbd; }
  .scrollbar button { display: flex; align-items: center; justify-content: center; height: 26px; border-bottom: 2px solid #bdbdbd; background: #fff; }
  .scrollbar button svg { width: 16px; height: 10px; }
  .thumb { flex: 9; background: linear-gradient(90deg, #fff 20%, #ededed); border-bottom: 2px solid #b8b8b8; }
  .track { flex: 11; background: #e3e3e3; }
</style>
